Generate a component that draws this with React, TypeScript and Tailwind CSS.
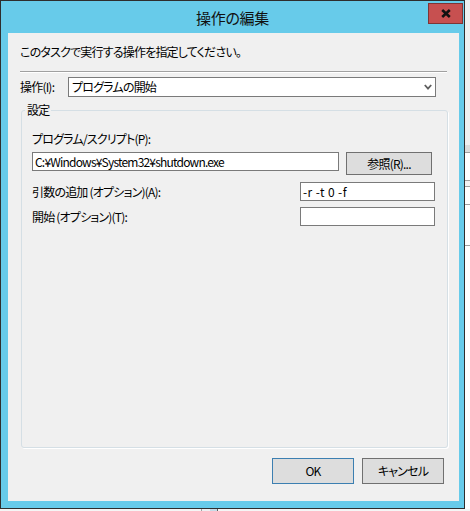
import React from "react";

function CloseGlyph() {
  return (
    <svg width="10" height="9" viewBox="0 0 10 9" className="block">
      <path d="M1.2 1 L8.8 8 M8.8 1 L1.2 8" stroke="#111" strokeWidth="2.6" strokeLinecap="butt" />
    </svg>
  );
}

function Chevron() {
  return (
    <svg width="8" height="6" viewBox="0 0 8 6" className="block">
      <path d="M0.8 1 L4 4.6 L7.2 1" fill="none" stroke="#5f5f5f" strokeWidth="1.8" />
    </svg>
  );
}

function TextBox({ width, value, extra = "" }: { width: string; value?: string; extra?: string }) {
  return (
    <div className={`${width} ${extra} h-[19px] shrink-0 border border-[#7a7a7a] bg-white pl-[2px] flex items-center whitespace-nowrap`}>
      {value}
    </div>
  );
}

// background window peeking out on the right edge
function BackdropEdge() {
  return (
    <div className="w-[5px] h-[509px] flex flex-col bg-white">
      <div className="h-[145px] bg-[#f0f0f0]" />
      <div className="h-[7px] bg-[#dcdcdc]" />
      <div className="h-[28px] border-t border-[#a0a0a0]" />
      <div className="h-[6px] border-t border-[#a0a0a0] bg-[#f3f3f3]" />
      <div className="h-[18px] border-t border-[#a0a0a0]" />
      <div className="h-[41px] border-t border-[#a0a0a0]" />
      <div className="flex-1 border-t border-[#a0a0a0]" />
    </div>
  );
}

function BackdropBottom() {
  return (
    <div className="h-[2px] flex bg-[#f5f5f5]">
      <div className="w-[201px]" />
      <div className="w-[1px] bg-[#a0a0a0]" />
      <div className="w-[8px] bg-[#eef0f2]" />
      <div className="w-[7px] bg-[#c8dce8]" />
      <div className="w-[1px] bg-[#606060]" />
    </div>
  );
}

export default function App() {
  return (
    <div className="w-[470px] h-[511px] overflow-hidden bg-white flex flex-col font-['Noto_Sans_CJK_JP',sans-serif] [font-feature-settings:'palt'] text-[12px] leading-[16px] tracking-[-0.8px] text-black">
      <div className="flex h-[509px]">
        {/* Dialog window */}
        <div className="w-[465px] h-[509px] shrink-0 border border-[#2e2e2e] bg-[#67cbea] flex flex-col">
          {/* Title bar */}
          <div className="h-[32px] grid grid-cols-[1fr_auto_1fr] items-start">
            <div />
            <div className="self-center text-[15px] leading-[20px] pt-[2px] tracking-[-0.3px] text-[#111]">操作の編集</div>
            <button className="justify-self-end mt-[2px] mr-[1px] w-[35px] h-[21px] bg-[#c75050] border border-[#7e3535] flex items-center justify-center">
              <CloseGlyph />
            </button>
          </div>

          {/* Client area */}
          <div className="flex h-[468px] pl-[7px] pr-[5px]">
            <div className="w-[451px] bg-[#f0f0f0] flex flex-col">
              <div className="pl-[12px] pt-[11px]">このタスクで実行する操作を指定してください。</div>
              <div className="mx-[12px] mt-[11px] h-[2px] border-t border-[#a0a0a0] border-b border-b-white" />

              {/* Action */}
              <div className="mt-[4px] ml-[12px] h-[20px] flex items-center">
                <div className="w-[48px]">操作(I):</div>
                <div className="w-[368px] h-[20px] border border-[#7a7a7a] bg-white pl-[3px] pr-[3px] flex items-center justify-between">
                  <span>プログラムの開始</span>
                  <Chevron />
                </div>
              </div>

              {/* Settings group */}
              <fieldset className="mt-[5px] ml-[13px] w-[427px] h-[346px] border border-[#d5dfe5] rounded-[3px] pl-[10px] pr-[12px] pt-[13px] shadow-[1px_1px_0_#ffffff]">
                <legend className="-ml-[7px] px-[2px] leading-[16px]">設定</legend>
                <div>プログラム/スクリプト(P):</div>
                <div className="mt-[5px] flex items-start">
                  <TextBox width="w-[307px]" value="C:¥Windows¥System32¥shutdown.exe" />
                  <button className="ml-[7px] w-[86px] h-[23px] border border-[#707070] bg-[#dddddd] flex items-center justify-center">
                    参照(R)...
                  </button>
                </div>
                <div className="mt-[7px] flex items-center justify-between">
                  <div>引数の追加 (オプション)(A):</div>
                  <TextBox width="w-[135px]" value="-r -t 0 -f" extra="tracking-[0.4px]" />
                </div>
                <div className="mt-[6px] flex items-center justify-between">
                  <div>開始 (オプション)(T):</div>
                  <TextBox width="w-[135px]" />
                </div>
              </fieldset>

              {/* Dialog buttons */}
              <div className="mt-[10px] pr-[15px] flex justify-end gap-[8px]">
                <button className="w-[82px] h-[26px] border border-[#3c7fb1] bg-[#dddddd]">OK</button>
                <button className="w-[82px] h-[26px] border border-[#707070] bg-[#dddddd]">キャンセル</button>
              </div>
            </div>
          </div>
        </div>
        <BackdropEdge />
      </div>
      <BackdropBottom />
    </div>
  );
}
